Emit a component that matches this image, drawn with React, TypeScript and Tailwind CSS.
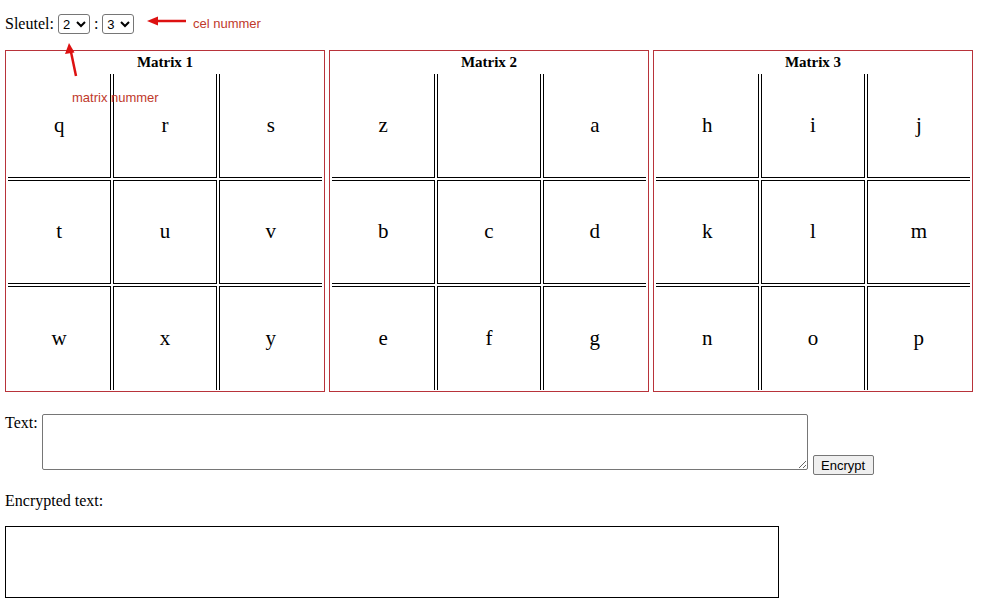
import React from "react";

const MATRICES = [
  { title: "Matrix 1", cells: ["q", "r", "s", "t", "u", "v", "w", "x", "y"] },
  { title: "Matrix 2", cells: ["z", "", "a", "b", "c", "d", "e", "f", "g"] },
  { title: "Matrix 3", cells: ["h", "i", "j", "k", "l", "m", "n", "o", "p"] },
];

// double lines: every cell only draws the borders that face a neighbour
const CELL_BORDERS = [
  "border-r border-b",
  "border-l border-r border-b",
  "border-l border-b",
  "border-r border-t border-b",
  "border-l border-r border-t border-b",
  "border-l border-t border-b",
  "border-r border-t",
  "border-l border-r border-t",
  "border-l border-t",
];

const Matrix: React.FC<{ title: string; cells: string[] }> = ({ title, cells }) => (
  <div className="flex flex-col w-[320px] h-[342px] border border-[#b8333a] px-[2px] pb-px">
    <div className="h-[23px] leading-[23px] text-center font-bold text-[15px]">{title}</div>
    <div className="grid grid-cols-3 grid-rows-3 gap-[2px] flex-1">
      {cells.map((c, i) => (
        <div
          key={i}
          className={`flex items-center justify-center text-[21px] border-black ${CELL_BORDERS[i]}`}
        >
          {c}
        </div>
      ))}
    </div>
  </div>
);

const App: React.FC = () => {
  return (
    <div className="relative w-[984px] h-[612px] bg-white text-black font-['Liberation_Serif',serif] text-[16px]">
      <div className="flex items-center pl-[5px] pt-[14px] h-[34px]">
        <span>Sleutel:</span>
        <select
          defaultValue="2"
          className="ml-[4px] w-[32px] h-[20px] border border-[#767676] rounded-[3px] text-[13px] font-['Liberation_Sans',sans-serif] bg-white"
        >
          <option>1</option>
          <option>2</option>
          <option>3</option>
        </select>
        <span className="mx-[4px]">:</span>
        <select
          defaultValue="3"
          className="w-[32px] h-[20px] border border-[#767676] rounded-[3px] text-[13px] font-['Liberation_Sans',sans-serif] bg-white"
        >
          <option>1</option>
          <option>2</option>
          <option>3</option>
        </select>
      </div>

      <div className="flex gap-[4px] pl-[5px] mt-[16px]">
        {MATRICES.map((m) => (
          <Matrix key={m.title} title={m.title} cells={m.cells} />
        ))}
      </div>

      <div className="flex items-start pl-[5px] mt-[22px]">
        <span className="leading-[18px]">Text:</span>
        <textarea className="ml-[4px] w-[766px] h-[56px] border border-[#767676] rounded-[2px] bg-white" />
        <button className="ml-[5px] mt-[41px] w-[61px] h-[20px] border border-[#767676] rounded-[2px] bg-[#efefef] text-[13px] leading-none font-['Liberation_Sans',sans-serif]">
          Encrypt
        </button>
      </div>

      <div className="pl-[5px] mt-[14px] leading-[24px]">Encrypted text:</div>
      <div className="ml-[5px] mt-[13px] w-[774px] h-[72px] border border-black" />

      {/* annotations drawn over the page */}
      <svg className="absolute left-0 top-0 pointer-events-none" width="984" height="612">
        <line x1="186" y1="21" x2="156" y2="21" stroke="#d11" strokeWidth="2.5" />
        <polygon points="147,21 158,16.5 158,25.5" fill="#d11" />
        <line x1="76" y1="76" x2="71" y2="52" stroke="#d11" strokeWidth="2.5" />
        <polygon points="69,43 65,54 74.5,52.5" fill="#d11" />
      </svg>
      <span className="absolute left-[193px] top-[14px] text-[13px] text-[#c0392b] font-['Liberation_Sans',sans-serif]">
        cel nummer
      </span>
      <span className="absolute left-[72px] top-[88px] text-[13px] text-[#c0392b] font-['Liberation_Sans',sans-serif]">
        matrix nummer
      </span>
    </div>
  );
};

export default App;
